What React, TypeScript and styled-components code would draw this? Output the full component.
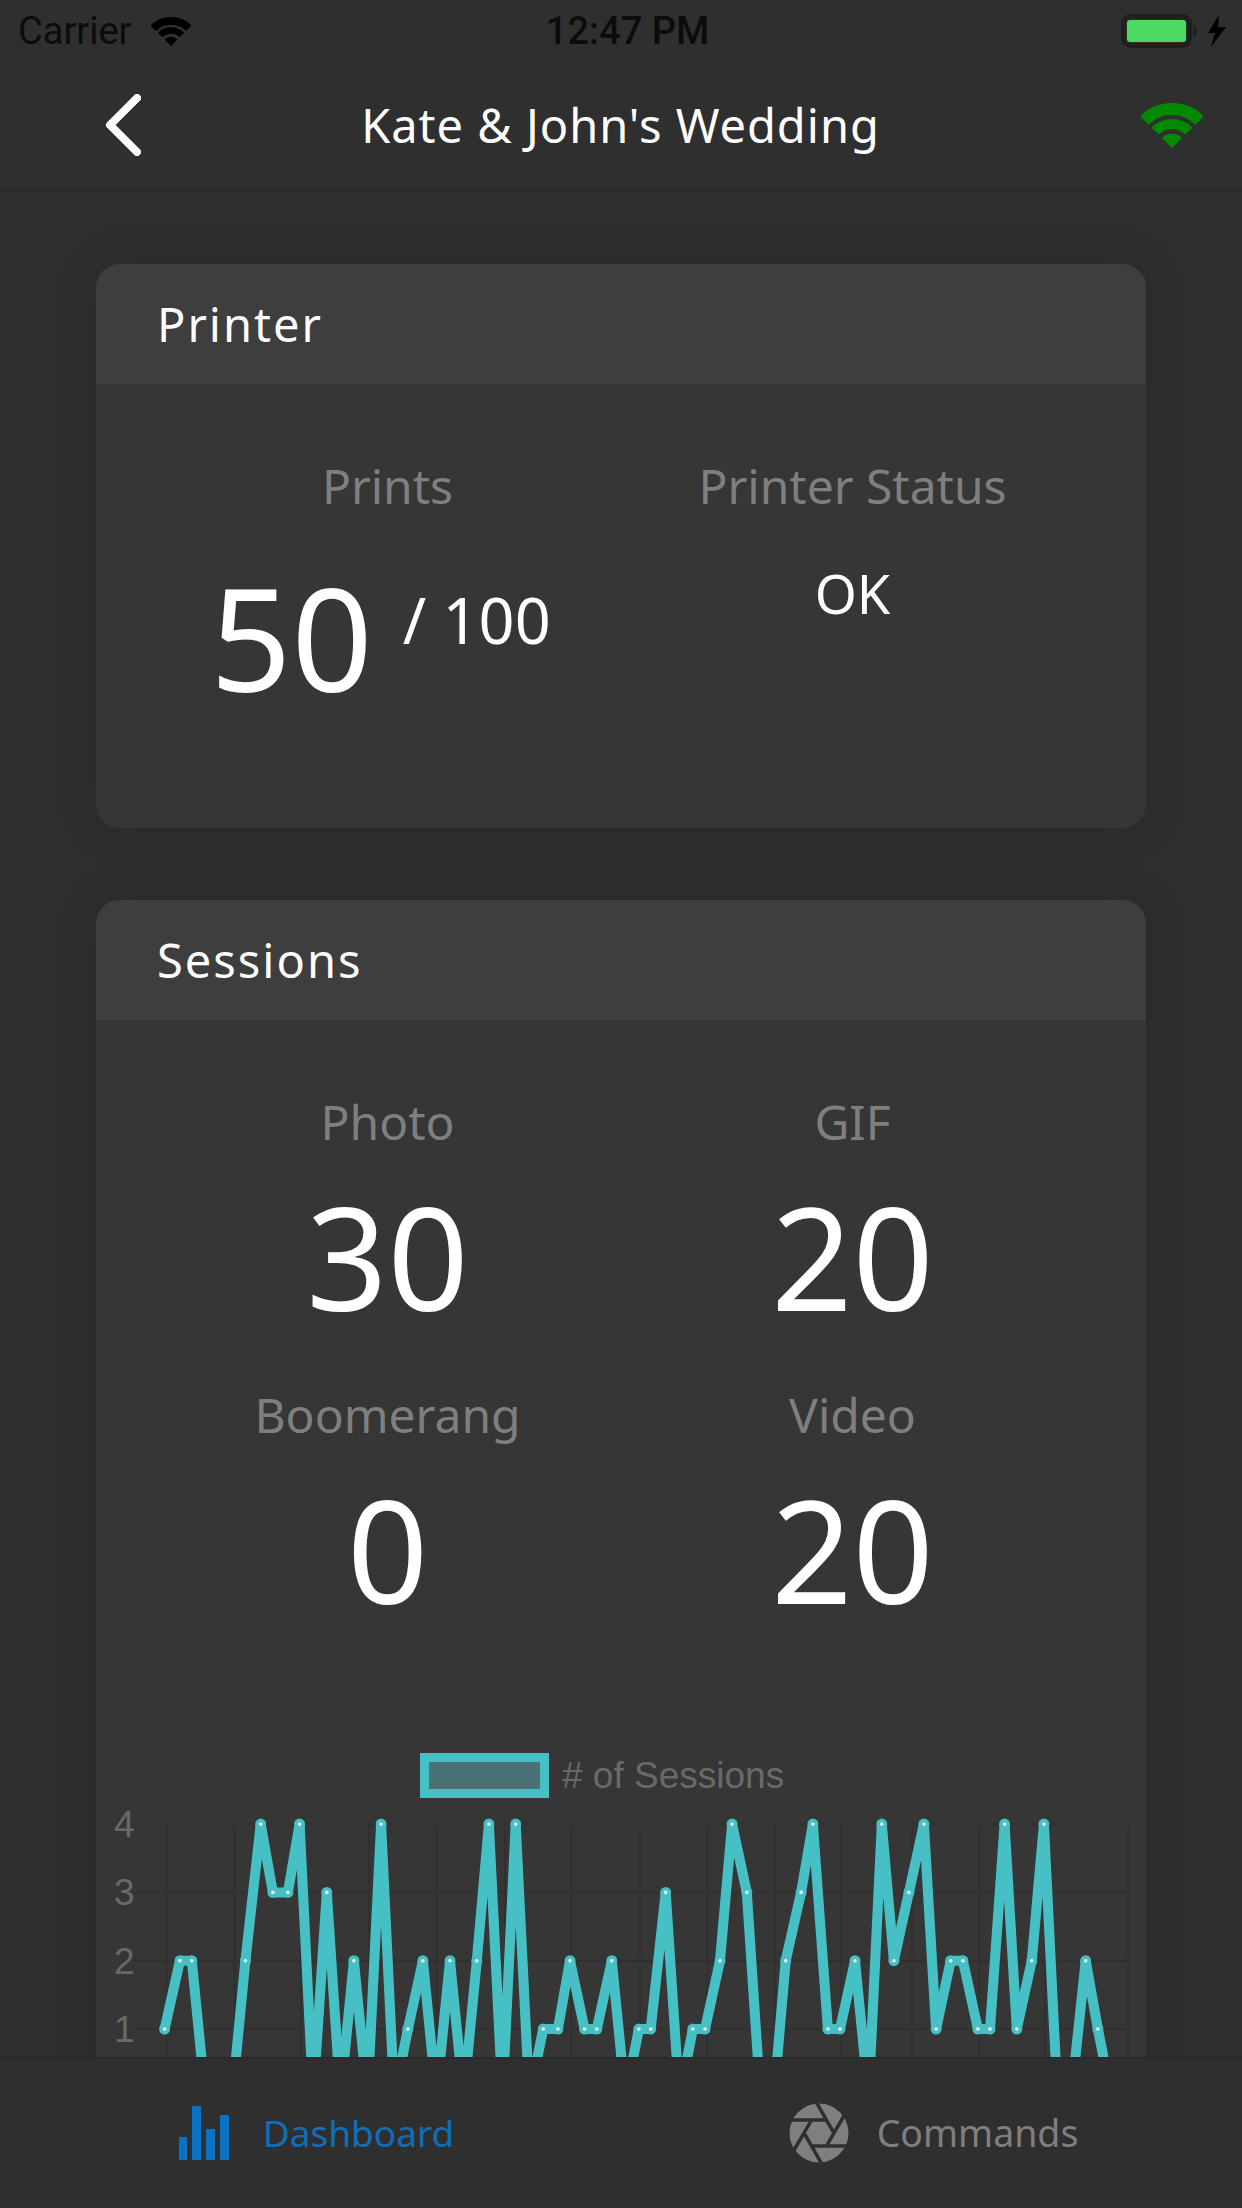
import React, {FC} from 'react';
import styled, {createGlobalStyle} from 'styled-components';

const GlobalStyle = createGlobalStyle`
    html, body, #root {
        margin: 0;
        height: 100%;
    }

    body {
        background-color: #2f2f2f;
        font-family: "Noto Sans", "Open Sans", sans-serif;
    }
`

// [x, value] read off the chart, one pair for each session
const sessions: [number, number][] = [
    [164.6, 1], [180, 2], [191.8, 2], [205.4, 0], [218.9, 0], [232.1, 0], [245.4, 2], [260.7, 4], [272.9, 3],
    [287.9, 3], [299.6, 4], [313.2, 0], [326.8, 3], [340.4, 0], [353.9, 2], [367.5, 0], [381.1, 4], [394.3, 0],
    [407.9, 1], [422.9, 2], [436.4, 0], [450, 2], [463.6, 0], [476.8, 2], [488.9, 4], [502.5, 0], [515.7, 4],
    [529.3, 0], [543.2, 1], [557.9, 1], [570, 2], [584.6, 1], [596.8, 1], [611.8, 2], [625.4, 0], [638.9, 1],
    [650.7, 1], [665.7, 3], [679.3, 0], [692.9, 1], [705, 1], [720, 2], [732.1, 4], [746.8, 3], [760.4, 0],
    [773.9, 0], [785.7, 2], [801.1, 3], [812.9, 4], [827.9, 1], [840, 1], [855, 2], [868.6, 0], [881.8, 4],
    [893.9, 2], [908.9, 3], [923.9, 4], [936.1, 1], [950.7, 2], [962.9, 2], [977.9, 1], [990, 1], [1004.6, 4],
    [1016.8, 1], [1031.8, 2], [1043.9, 4], [1057.5, 0], [1071.1, 0], [1085.7, 2], [1097.9, 1], [1111.4, 0],
];

const gridX = [166.8, 234.6, 301, 369, 437, 505, 571, 640, 707, 775, 841, 912, 979, 1045, 1128];
const valueY = (value: number) => 2097.3 - value * 68.3;

const WifiIcon: FC<{ color: string; width: number; height: number }> = ({color, width, height}) => (
    <svg width={width} height={height} viewBox="0 0 64 45" fill="none">
        <path d="M4.4 17.4 A39 39 0 0 1 59.6 17.4" stroke={color} strokeWidth="12"/>
        <path d="M15 28 A24 24 0 0 1 49 28" stroke={color} strokeWidth="10"/>
        <path d="M32 45 L22 35 A14 14 0 0 1 42 35 Z" fill={color}/>
    </svg>
);

const BatteryIcon: FC = () => (
    <svg width="106" height="34" viewBox="0 0 106 34" fill="none">
        <rect x="2.5" y="2.5" width="66" height="29" rx="7" stroke="#202020" strokeWidth="5"/>
        <rect x="6" y="6" width="59" height="22" rx="3" fill="#4cd964"/>
        <path d="M72 11 C75 12 76 15 76 17 C76 19 75 22 72 23 Z" fill="#202020"/>
        <path d="M98 1 L87 19 L94 19 L90 33 L105 13 L97 13 Z" fill="#000"/>
    </svg>
);

const BackIcon: FC = () => (
    <svg width="36" height="62" viewBox="0 0 36 62" fill="none">
        <path d="M32 4 L5 31 L32 58" stroke="#fff" strokeWidth="8" strokeLinecap="round" strokeLinejoin="round"/>
    </svg>
);

const BarsIcon: FC = () => (
    <svg width="50" height="54" viewBox="0 0 50 54" fill="#0a72c4">
        <rect x="0" y="31" width="8" height="23"/>
        <rect x="13" y="0" width="9" height="54"/>
        <rect x="27" y="23" width="9" height="31"/>
        <rect x="41" y="9" width="9" height="45"/>
    </svg>
);

const ApertureIcon: FC = () => (
    <svg width="60" height="60" viewBox="-30 -30 60 60">
        <circle r="29.5" fill="#7f7f7f"/>
        {[0, 60, 120, 180, 240, 300].map(angle => (
            <path
                key={angle}
                d="M7.5 13 L15 0 L25.5 -18"
                transform={`rotate(${angle})`}
                fill="none"
                stroke="#2f2f2f"
                strokeWidth="3.5"
            />
        ))}
    </svg>
);

const SessionsChart: FC = () => (
    <ChartSvg viewBox="96 1740 1050 400" width="1050" height="400">
        <rect x="424.5" y="1757.5" width="120" height="36" fill="#4a7173" stroke="#46c0c4" strokeWidth="9"/>
        <ChartText x="562" y="1788"># of Sessions</ChartText>
        {[4, 3, 2, 1].map(value => (
            <g key={value}>
                <line x1="133" x2="1128" y1={valueY(value)} y2={valueY(value)} stroke="#303030" strokeWidth="2"/>
                <ChartText x="114" y={valueY(value) + 13}>{value}</ChartText>
            </g>
        ))}
        {gridX.map(x => (
            <line key={x} x1={x} x2={x} y1="1824" y2="2140" stroke="#303030" strokeWidth="2"/>
        ))}
        <polyline
            points={sessions.map(([x, value]) => `${x},${valueY(value)}`).join(' ')}
            fill="none"
            stroke="#46c0c4"
            strokeWidth="10"
            strokeLinejoin="bevel"
        />
        {sessions.map(([x, value]) => (
            <g key={x}>
                <circle cx={x} cy={valueY(value)} r="5.5" fill="#46c0c4"/>
                <circle cx={x} cy={valueY(value)} r="1.8" fill="#e8f8f8"/>
            </g>
        ))}
    </ChartSvg>
);

const App: FC = () => {
    return (
        <Screen>
            <GlobalStyle/>
            <StatusBar>
                <Carrier>Carrier <WifiIcon color="#000" width={42} height={29}/></Carrier>
                <Clock>12:47 PM</Clock>
                <BatteryWrap><BatteryIcon/></BatteryWrap>
            </StatusBar>
            <NavBar>
                <BackButton><BackIcon/></BackButton>
                <NavTitle>Kate &amp; John's Wedding</NavTitle>
                <NavStatus><WifiIcon color="#008a00" width={64} height={45}/></NavStatus>
            </NavBar>
            <Content>
                <Card>
                    <CardHeader>Printer</CardHeader>
                    <PrinterBody>
                        <Stat>
                            <StatLabel>Prints</StatLabel>
                            <PrintCount>
                                <StatValue>50</StatValue>
                                <PrintLimit>/ 100</PrintLimit>
                            </PrintCount>
                        </Stat>
                        <Stat>
                            <StatLabel>Printer Status</StatLabel>
                            <StatusText>OK</StatusText>
                        </Stat>
                    </PrinterBody>
                </Card>
                <Card>
                    <CardHeader>Sessions</CardHeader>
                    <SessionsBody>
                        <Stat>
                            <StatLabel>Photo</StatLabel>
                            <StatValue>30</StatValue>
                        </Stat>
                        <Stat>
                            <StatLabel>GIF</StatLabel>
                            <StatValue>20</StatValue>
                        </Stat>
                        <Stat>
                            <StatLabel>Boomerang</StatLabel>
                            <StatValue>0</StatValue>
                        </Stat>
                        <Stat>
                            <StatLabel>Video</StatLabel>
                            <StatValue>20</StatValue>
                        </Stat>
                    </SessionsBody>
                    <SessionsChart/>
                </Card>
            </Content>
            <TabBar>
                <Tab $active>
                    <BarsIcon/>
                    Dashboard
                </Tab>
                <Tab>
                    <ApertureIcon/>
                    Commands
                </Tab>
            </TabBar>
        </Screen>
    );
};

export default App;

const Screen = styled.div`
    height: 100vh;
    display: flex;
    flex-direction: column;
    overflow: hidden;
    background-color: #2f2f2f;
`

const StatusBar = styled.div`
    height: 60px;
    flex: none;
    box-sizing: border-box;
    display: grid;
    grid-template-columns: 1fr auto 1fr;
    align-items: center;
    padding: 2px 15px 0 18px;
    color: #0c0c0c;
    font-family: Roboto, "Liberation Sans", sans-serif;
    font-size: 38px;
`

const Carrier = styled.div`
    display: flex;
    align-items: center;
    gap: 19px;
`

const Clock = styled.div`
    font-weight: 500;
    margin-left: 10px;
`

const BatteryWrap = styled.div`
    justify-self: end;
    display: flex;
`

const NavBar = styled.div`
    height: 132px;
    flex: none;
    box-sizing: border-box;
    display: grid;
    grid-template-columns: 1fr auto 1fr;
    align-items: center;
    padding: 0 38px 0 105px;
    border-bottom: 2px solid #2a2a2a;
`

const BackButton = styled.div`
    display: flex;
`

const NavStatus = styled.div`
    justify-self: end;
    display: flex;
`

const NavTitle = styled.div`
    color: #fff;
    font-size: 47px;
    letter-spacing: 1px;
    margin-left: -68px;
`

const Content = styled.div`
    flex: 1;
    min-height: 0;
    overflow: hidden;
    display: flex;
    flex-direction: column;
    gap: 72px;
    padding: 72px 96px 0;
`

const Card = styled.section`
    flex: none;
    border-radius: 24px;
    background-color: #363636;
    box-shadow: 0 0 44px rgba(0, 0, 0, 0.16);
    overflow: hidden;
`

const CardHeader = styled.h2`
    margin: 0;
    height: 120px;
    display: flex;
    align-items: center;
    padding-left: 61px;
    background-color: #3e3e3e;
    color: #fff;
    font-size: 47px;
    font-weight: 400;
    letter-spacing: 2px;
`

const StatGrid = styled.div`
    display: grid;
    grid-template-columns: 465px 465px;
    padding: 72px 61px 0 59px;
`

const PrinterBody = styled(StatGrid)`
    height: 444px;
    box-sizing: border-box;
`

const SessionsBody = styled(StatGrid)`
    row-gap: 54px;
    padding-bottom: 116px;
`

const Stat = styled.div`
    display: flex;
    flex-direction: column;
    align-items: center;
`

const StatLabel = styled.div`
    height: 60px;
    line-height: 60px;
    color: #7f7f7f;
    font-size: 48px;
`

const StatValue = styled.div`
    height: 150px;
    margin-top: 29px;
    line-height: 150px;
    color: #fff;
    font-size: 142px;
`

const PrintCount = styled.div`
    display: flex;
    gap: 30px;
    margin: 17px 14px 0 0;
`

const PrintLimit = styled.div`
    margin-top: 42px;
    height: 90px;
    line-height: 90px;
    color: #fff;
    font-size: 63px;
`

const StatusText = styled.div`
    margin-top: 42px;
    color: #fff;
    font-size: 54px;
    line-height: 70px;
`

const ChartSvg = styled.svg`
    display: block;
`

const ChartText = styled.text`
    fill: #696969;
    font-family: "Liberation Sans", sans-serif;
    font-size: 37px;
`

const TabBar = styled.nav`
    height: 151px;
    flex: none;
    box-sizing: border-box;
    display: grid;
    grid-template-columns: 1fr 1fr;
    border-top: 2px solid #2a2a2a;
    background-color: #2f2f2f;
`

const Tab = styled.div<{ $active?: boolean }>`
    display: flex;
    align-items: center;
    justify-content: center;
    gap: ${props => props.$active ? '34px' : '28px'};
    padding: 0 0 2px ${props => props.$active ? '12px' : '4px'};
    color: ${props => props.$active ? '#0e6fb8' : '#7f7f7f'};
    font-size: ${props => props.$active ? '37px' : '37.5px'};
`
